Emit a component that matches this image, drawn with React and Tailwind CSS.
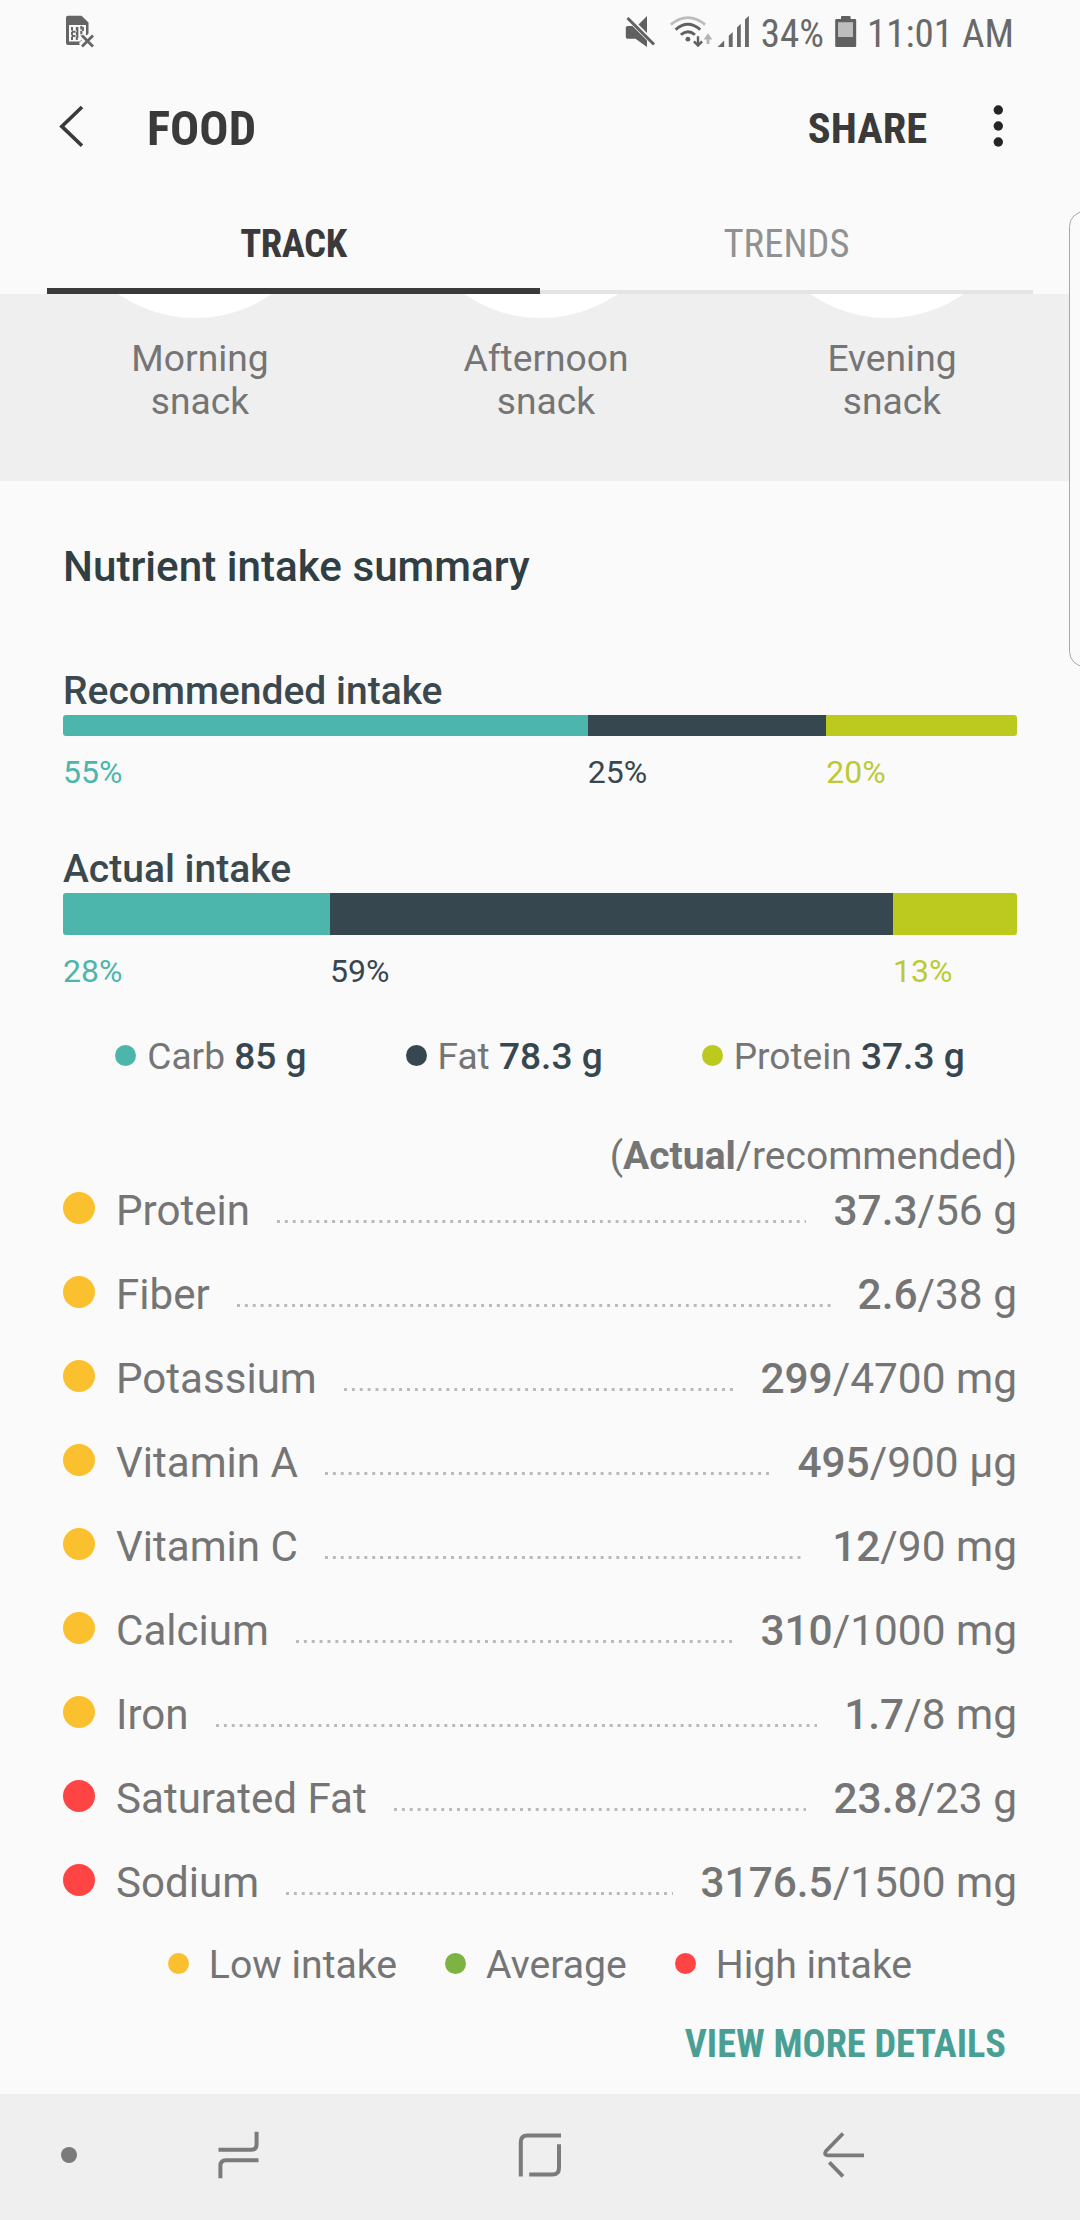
const meals = ['Morning', 'Afternoon', 'Evening'];

const recommended = [
  { pct: 55, width: '55%', bar: 'bg-[#4db6ac]', text: 'text-[#4db6ac]' },
  { pct: 25, width: '25%', bar: 'bg-[#37474f]', text: 'text-[#37474f]' },
  { pct: 20, width: '20%', bar: 'bg-[#bcca1f]', text: 'text-[#bcca35]' },
];

const actual = [
  { pct: 28, width: '28%', bar: 'bg-[#4db6ac]', text: 'text-[#4db6ac]' },
  { pct: 59, width: '59%', bar: 'bg-[#37474f]', text: 'text-[#37474f]' },
  { pct: 13, width: '13%', bar: 'bg-[#bcca1f]', text: 'text-[#bcca35]' },
];

const macros = [
  { name: 'Carb', value: '85 g', dot: 'bg-[#4db6ac]' },
  { name: 'Fat', value: '78.3 g', dot: 'bg-[#37474f]' },
  { name: 'Protein', value: '37.3 g', dot: 'bg-[#bcca1f]' },
];

const LOW = 'bg-[#fbc02d]';
const HIGH = 'bg-[#ff4444]';

const nutrients = [
  { name: 'Protein', actual: '37.3', goal: '56 g', dot: LOW },
  { name: 'Fiber', actual: '2.6', goal: '38 g', dot: LOW },
  { name: 'Potassium', actual: '299', goal: '4700 mg', dot: LOW },
  { name: 'Vitamin A', actual: '495', goal: '900 µg', dot: LOW },
  { name: 'Vitamin C', actual: '12', goal: '90 mg', dot: LOW },
  { name: 'Calcium', actual: '310', goal: '1000 mg', dot: LOW },
  { name: 'Iron', actual: '1.7', goal: '8 mg', dot: LOW },
  { name: 'Saturated Fat', actual: '23.8', goal: '23 g', dot: HIGH },
  { name: 'Sodium', actual: '3176.5', goal: '1500 mg', dot: HIGH },
];

const levels = [
  { name: 'Low intake', dot: LOW },
  { name: 'Average', dot: 'bg-[#7cb342]' },
  { name: 'High intake', dot: 'bg-[#ff4444]' },
];

function StatusBar() {
  return (
    <div className="flex h-[67px] items-center pl-16 pr-[66px] text-[39px] leading-[67px] text-[#696969] [font-family:'Roboto_Condensed',Roboto,sans-serif]">
      <svg className="mb-1 h-[35px] w-[32px]" viewBox="64 14 32 35" fill="none">
        <path d="M68 15.8H81.5L88.5 22.5V33.5L79 43L80 45H68Q66 45 66 43V17.8Q66 15.8 68 15.8Z" fill="#656565" />
        <path d="M69 25H86V34L80 41.5H69Z" fill="#fafafa" />
        <path d="M72 27V40M72 31.8H76M72 36H76M76.8 27V40M81.3 26V36" stroke="#656565" strokeWidth="2" strokeDasharray="3.4 1.4" />
        <path d="M77.5 27V38M83 27V31" stroke="#656565" strokeWidth="1.8" />
        <path d="M82 35.5L93 46.5M93 35.5L82 46.5" stroke="#fafafa" strokeWidth="6.5" />
        <path d="M82 35.5L93 46.5M93 35.5L82 46.5" stroke="#656565" strokeWidth="2.8" />
      </svg>
      <div className="flex-1" />
      <svg className="mb-1 h-[35px] w-[33px]" viewBox="624 14 33 35" fill="none">
        <path d="M647 16V33L638.5 24.5Z" fill="#606060" />
        <path d="M625.8 27.5Q625.8 26 627.5 26H632.5L647 40.5V47L635.5 38.8H627.5Q625.8 38.8 625.8 37Z" fill="#606060" />
        <path d="M627.5 18L654 44.5" stroke="#606060" strokeWidth="3" />
      </svg>
      <svg className="mb-1 ml-3 h-[35px] w-[44px]" viewBox="669 14 44 35" fill="none">
        <path d="M670.8 24.6Q687.7 10.6 705.2 24.6" stroke="#bcbcbc" strokeWidth="2.8" />
        <path d="M675.6 29.6Q687.7 19 700.3 29.6" stroke="#606060" strokeWidth="2.8" />
        <path d="M680.8 34.8Q687.8 28.6 695 34.8" stroke="#606060" strokeWidth="2.8" />
        <circle cx="687.9" cy="39.2" r="2.4" fill="#606060" />
        <path d="M698 36.3V45.5M693.9 41.3L698 45.6L702.1 41.3" stroke="#606060" strokeWidth="2.4" />
        <path d="M708 44V36" stroke="#b4b4b4" strokeWidth="2.8" />
        <path d="M703.6 39.5L708 33.3L712.4 39.5Z" fill="#b4b4b4" />
      </svg>
      <svg className="mb-1 ml-[3px] h-[35px] w-[34px]" viewBox="716 14 34 35" fill="#696969">
        <path d="M717.6 47L724.2 40.4V47Z" />
        <path d="M728.8 47V35.8L732.7 32V47Z" />
        <path d="M737 47V27.6L740.8 23.8V47Z" />
        <path d="M745 47V19.6L748.9 15.8V47Z" />
      </svg>
      <span className="ml-[11px] mt-[2px]">34%</span>
      <svg className="mb-1 ml-[10px] h-[35px] w-[23px]" viewBox="834 14 23 35">
        <path d="M841 19V17Q841 16 842 16H849.6Q850.6 16 850.6 17V19H855Q856.2 19 856.2 20.2V45.8Q856.2 47 855 47H836.4Q835.2 47 835.2 45.8V20.2Q835.2 19 836.4 19Z" fill="#606060" />
        <path d="M838 22.2H853V37H838Z" fill="#bdbdbd" />
      </svg>
      <span className="ml-[10px] mt-[2px]">11:01 AM</span>
    </div>
  );
}

function AppHeader() {
  return (
    <header className="flex h-[123px] items-center pl-14 pr-[76px] font-bold text-[#3a3a3a] [font-family:'Roboto_Condensed',Roboto,sans-serif]">
      <svg className="mb-1 h-[45px] w-[30px]" viewBox="56 104 30 45" fill="none">
        <path d="M82 107L61.8 126.4L82 145.8" stroke="#3a3a3a" strokeWidth="3.6" />
      </svg>
      <h1 className="ml-[61px] text-[48.5px] leading-[60px]">FOOD</h1>
      <div className="flex-1" />
      <span className="text-[42.5px] leading-[60px]">SHARE</span>
      <svg className="mb-1 ml-[65px] h-[45px] w-[12px]" viewBox="992 104 12 45" fill="#252525">
        <circle cx="998.3" cy="110" r="4.7" />
        <circle cx="998.3" cy="126" r="4.7" />
        <circle cx="998.3" cy="142" r="4.7" />
      </svg>
    </header>
  );
}

function Tabs() {
  return (
    <nav className="mx-[47px] grid h-[104px] grid-cols-2 text-center text-[38.7px] leading-[107px] [font-family:'Roboto_Condensed',Roboto,sans-serif]">
      <div className="h-[104px] border-b-[6px] border-[#3a3a3a] font-bold tracking-[-0.4px] text-[#3a3a3a]">TRACK</div>
      <div className="h-[104px] border-b-4 border-[#e4e4e4] text-[#919191]">TRENDS</div>
    </nav>
  );
}

function IntakeBar({ title, segments, height }) {
  return (
    <div>
      <h3 className="text-[39px] font-medium leading-[48px] text-[#3b494f]">{title}</h3>
      <div className={'flex overflow-hidden rounded-[3px] ' + height}>
        {segments.map((s) => (
          <div key={s.pct} className={s.bar} style={{ width: s.width }} />
        ))}
      </div>
      <div className="mt-[17px] flex text-[32px] leading-[38px]">
        {segments.map((s) => (
          <div key={s.pct} className={s.text} style={{ width: s.width }}>
            {s.pct}%
          </div>
        ))}
      </div>
    </div>
  );
}

function NavigationBar() {
  return (
    <div className="flex h-[126px] items-center bg-[#efefef] pl-[61px]">
      <div className="mb-1 size-4 rounded-full bg-[#7b7b7b]" />
      <svg className="mb-1 ml-[139px] h-[50px] w-[46px]" viewBox="216 2130 46 50" fill="none" stroke="#7b7b7b" strokeWidth="4">
        <path d="M218.5 2149.8H251Q256.6 2149.8 256.6 2144.2V2131.7" />
        <path d="M258.5 2160.2H226Q220.4 2160.2 220.4 2165.8V2178.2" />
      </svg>
      <svg className="mb-1 ml-[254px] h-[50px] w-[48px]" viewBox="516 2130 48 50" fill="none" stroke="#7b7b7b" strokeWidth="4">
        <path d="M520.8 2176.5V2142Q520.8 2135.5 527.3 2135.5H561" />
        <path d="M559 2144.3V2168Q559 2174.5 552.5 2174.5H529.2" />
      </svg>
      <svg className="mb-1 ml-[258px] h-[50px] w-[44px]" viewBox="822 2130 44 50" fill="none" stroke="#7b7b7b" strokeWidth="3.8" strokeLinejoin="round">
        <path d="M843 2133.5L825.8 2151.3Q823.6 2155.3 827.6 2155.3H864" />
        <path d="M829.3 2162.3L843 2176.3" />
      </svg>
    </div>
  );
}

export default function App() {
  return (
    <div className="relative flex h-[2220px] w-[1080px] flex-col overflow-hidden bg-[#fafafa] text-[#757575] [font-family:Roboto,sans-serif]">
      <StatusBar />
      <AppHeader />
      <Tabs />

      <section className="grid h-[187px] grid-cols-3 bg-[#efefef] pl-[27px] pr-[15px]">
        {meals.map((meal) => (
          <div key={meal} className="text-center">
            <div className="relative h-6 overflow-hidden">
              <div className="absolute bottom-0 left-[33px] size-[270px] rounded-full bg-white" />
            </div>
            <p className="mt-[19px] text-[37.2px] leading-[43px]">
              {meal}
              <br />
              snack
            </p>
          </div>
        ))}
      </section>

      <main className="flex-1 px-[63px] pt-14">
        <h2 className="text-[42.2px] font-medium leading-[60px] text-[#2f3f44]">Nutrient intake summary</h2>

        <div className="mt-[70px] flex flex-col gap-[54px]">
          <IntakeBar title="Recommended intake" segments={recommended} height="h-[21px]" />
          <IntakeBar title="Actual intake" segments={actual} height="h-[42px]" />
        </div>

        <div className="mt-[45px] flex justify-center gap-[99px] text-[37.1px] leading-[44px]">
          {macros.map((m) => (
            <div key={m.name} className="flex items-center gap-[11px]">
              <i className={'mb-[3px] size-[21px] rounded-full ' + m.dot} />
              <span>
                {m.name} <b className="font-medium text-[#37474f]">{m.value}</b>
              </span>
            </div>
          ))}
        </div>

        <p className="mt-[65px] text-right text-[39px] leading-[25px]">
          (<b className="font-bold">Actual</b>/recommended)
        </p>

        <ul className="-mt-px">
          {nutrients.map((n) => (
            <li key={n.name} className="flex h-[84px] items-center text-[42.4px] leading-[84px]">
              <i className={'mb-1 size-8 rounded-full ' + n.dot} />
              <span className="ml-[21px] mt-[2px] text-[42.1px]">{n.name}</span>
              <span className="mx-[27px] mt-[23px] h-[3px] flex-1 bg-[linear-gradient(90deg,#bababa_3px,transparent_3px)] bg-[length:7.89px_3px] bg-repeat-x" />
              <span className="mt-[2px]">
                <b className="font-medium">{n.actual}</b>/{n.goal}
              </span>
            </li>
          ))}
        </ul>

        <div className="mt-[17px] flex justify-center gap-12 text-[39.2px] leading-[46px]">
          {levels.map((l) => (
            <div key={l.name} className="flex items-center gap-5">
              <i className={'mb-[3px] size-[21px] rounded-full ' + l.dot} />
              <span className="mt-px">{l.name}</span>
            </div>
          ))}
        </div>

        <div className="mr-[11px] mt-[33px] text-right text-[38.3px] font-bold leading-[46px] text-[#4a9f94] [font-family:'Roboto_Condensed',Roboto,sans-serif]">
          VIEW MORE DETAILS
        </div>
      </main>

      <NavigationBar />

      {/* Edge panel handle, hanging over the right side of the screen */}
      <div className="absolute -right-5 top-[211px] h-[456px] w-[31px] rounded-[18px] border-[1.5px] border-[#a8a8a8] bg-[#fafafa]" />
    </div>
  );
}
